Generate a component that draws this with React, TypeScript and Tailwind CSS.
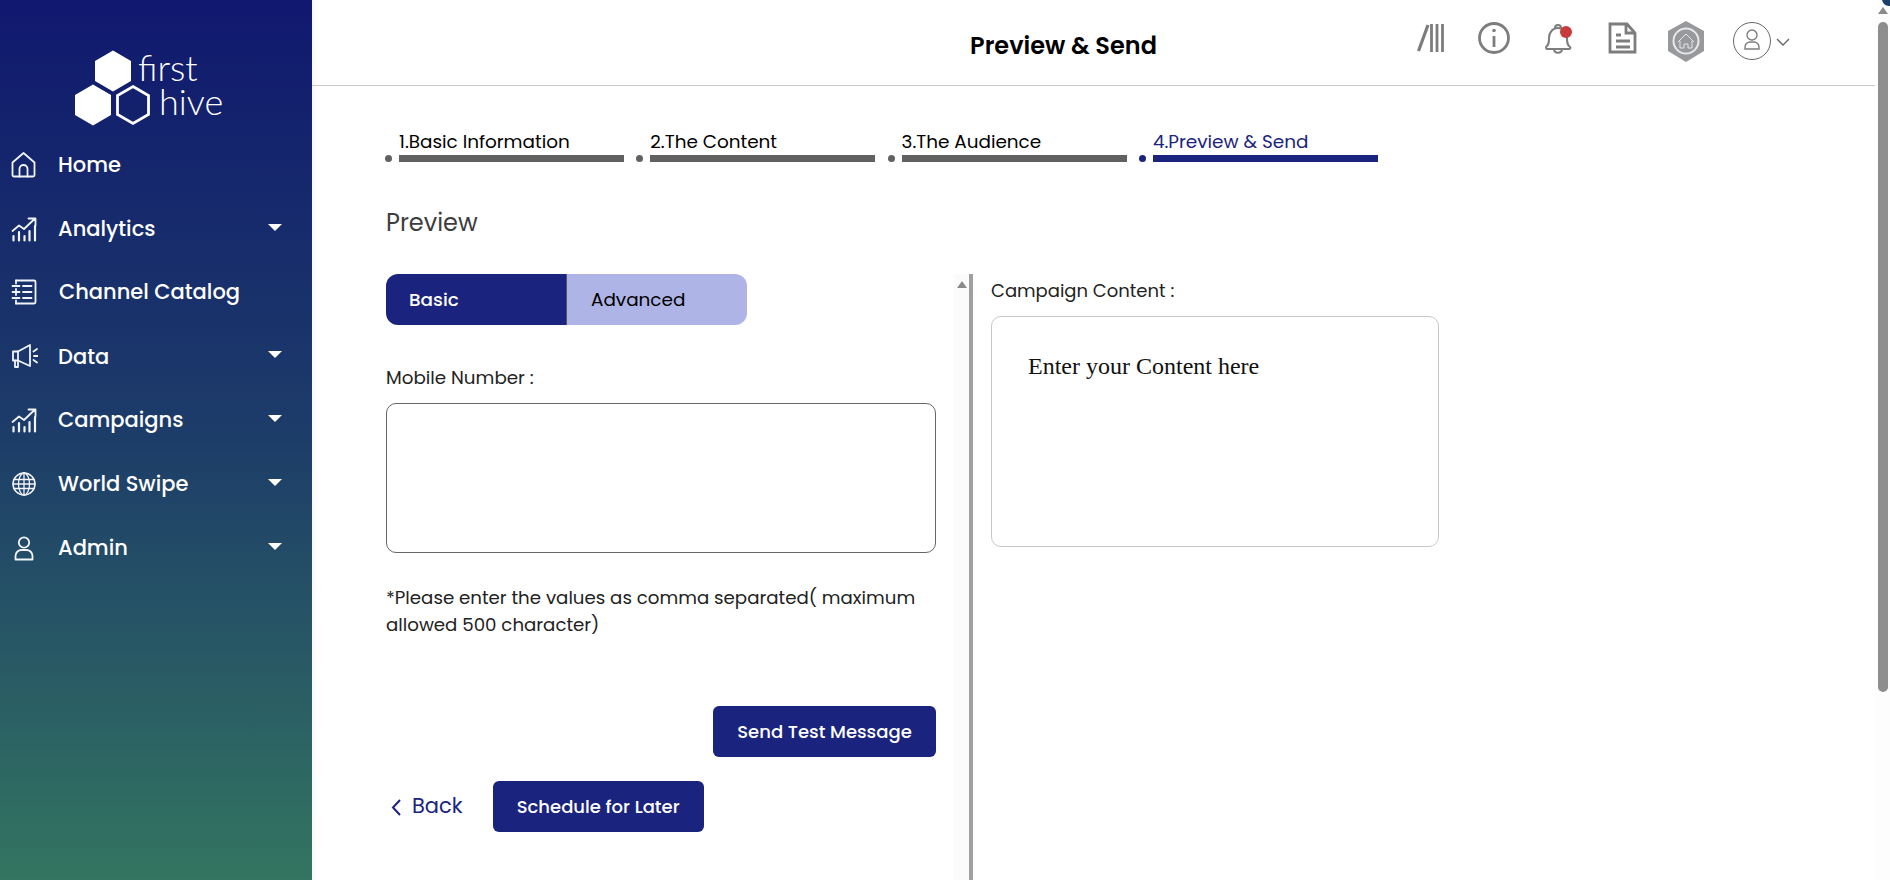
import React from "react";

function Hex({ x, y, solid }: { x: number; y: number; solid?: boolean }) {
  const p = `${x},${y - 20.5} ${x + 18},${y - 10} ${x + 18},${y + 10} ${x},${y + 20.5} ${x - 18},${y + 10} ${x - 18},${y - 10}`;
  return solid ? <polygon points={p} fill="#fff" /> : <polygon points={`${x},${y - 18.5} ${x + 15.5},${y - 9.5} ${x + 15.5},${y + 9.5} ${x},${y + 18.5} ${x - 15.5},${y + 9.5} ${x - 15.5},${y - 9.5}`} fill="none" stroke="#fff" strokeWidth="2.8" />;
}

function ico(children: React.ReactNode) {
  return (
    <svg width="28" height="28" viewBox="0 0 28 28" fill="none" stroke="#f1f4f8" strokeWidth="1.8" strokeLinecap="round" strokeLinejoin="round">
      {children}
    </svg>
  );
}

const HomeI = ico(<><path d="M2.5 11.5 13.5 2l11 9.5V24a1.5 1.5 0 0 1-1.5 1.5H4A1.5 1.5 0 0 1 2.5 24Z" /><path d="M9.5 25.5V18a4 4 0 0 1 8 0v7.5" /></>);
const ChartI = ico(<><path d="M2.5 16 9 10.5l5 3.5L24.5 4M18.5 3.5h7v7" /><path d="M3.5 21v4.5M9 17v8.5M14.5 21v4.5M19.5 16v9.5M25 11v14.5" strokeWidth="2.2" /></>);
const BookI = ico(<><path d="M6 2.5h18a1.5 1.5 0 0 1 1.5 1.5v20a1.5 1.5 0 0 1-1.5 1.5H6" /><path d="M6 2.5v3M6 11v6M6 22.5v3M2.5 8h7M2.5 14h7M2.5 20h7M13 8h8.5M13 14h8.5M13 20h8.5" /></>);
const MegaI = ico(<><path d="M8 9.5 20 3v21L8 18.5H3V9.5Z" /><path d="M8 9.5v9M5 18.5V25h3v-6M23.5 9.5l3.5-2.5M24 14h4M23.5 18l3.5 2.5" /></>);
const GlobeI = ico(<><circle cx="14" cy="14" r="11" strokeWidth="1.5" /><ellipse cx="14" cy="14" rx="5.5" ry="11" strokeWidth="1.3" /><path d="M14 3v22M4 9.5h20M3 14h22M4 18.5h20" strokeWidth="1.3" /></>);
const UserI = ico(<><circle cx="14" cy="8.5" r="5.2" /><path d="M5.5 25.5v-3.5a6 6 0 0 1 6-6h5a6 6 0 0 1 6 6v3.5Z" /></>);

const NAV = [
  { t: "Home", i: HomeI, caret: false },
  { t: "Analytics", i: ChartI, caret: true },
  { t: "Channel Catalog", i: BookI, caret: false, shift: true },
  { t: "Data", i: MegaI, caret: true },
  { t: "Campaigns", i: ChartI, caret: true },
  { t: "World Swipe", i: GlobeI, caret: true },
  { t: "Admin", i: UserI, caret: true },
];

const STEPS = [
  { t: "1.Basic Information", on: false },
  { t: "2.The Content", on: false },
  { t: "3.The Audience", on: false },
  { t: "4.Preview & Send", on: true },
];

export default function App() {
  return (
    <div className="flex h-[880px] w-[1890px] overflow-hidden bg-white font-['Poppins','Inter','Liberation_Sans',sans-serif] text-black">
      <aside className="flex h-full w-[312px] shrink-0 flex-col bg-[linear-gradient(180deg,#10186f_0%,#1d3d69_50%,#337560_100%)]">
        <div className="flex h-[133px] items-start">
          <div className="relative mt-[48px] ml-[70px] h-[80px] w-[160px]">
            <svg width="84" height="80" viewBox="0 0 84 80" className="absolute top-0 left-0">
              <Hex x={43} y={23} solid />
              <Hex x={23} y={57} solid />
              <Hex x={63} y={57} />
            </svg>
            <span className="absolute top-[3px] left-[68px] font-['Lato',sans-serif] text-[36px] leading-[32px] font-light text-white">first</span>
            <span className="absolute top-[37px] left-[89px] font-['Lato',sans-serif] text-[36px] leading-[32px] font-light text-white">hive</span>
          </div>
        </div>
        <nav className="flex flex-col">
          {NAV.map((n) => (
            <div key={n.t} className="flex h-[63.8px] items-center text-[21px] font-medium text-white">
              <span className="ml-[10px] flex w-[28px] justify-center">{n.i}</span>
              <span className={n.shift ? "ml-[21px] -translate-y-[1px]" : "ml-[20px]"}>{n.t}</span>
              {n.caret && <span className="mr-[30px] mb-[3px] ml-auto h-0 w-0 border-x-[7px] border-t-[7px] border-x-transparent border-t-white" />}
            </div>
          ))}
        </nav>
      </aside>

      <main className="flex min-w-0 flex-1 flex-col shadow-[inset_6px_0_6px_-4px_rgba(0,0,0,0.05)]">
        <header className="relative flex h-[86px] shrink-0 items-center justify-center border-b border-[#c9c9c9] pr-[60px]">
          <h1 className="mb-[-6px] text-[24px] font-semibold text-black">Preview &amp; Send</h1>
          <div className="absolute top-0 left-[1105px] h-[85px] w-[400px]">
            <svg width="400" height="85" viewBox="1417 0 400 85" fill="none" stroke="#7d7d7d">
              <path d="M1418.5 51 1428 25" strokeWidth="3.2" />
              <path d="M1431.5 24v28M1437 24v28M1442.5 24v28" strokeWidth="2.8" />
              <circle cx="1494" cy="38" r="14.5" strokeWidth="2.8" />
              <path d="M1494 36v11" strokeWidth="2.8" />
              <circle cx="1494" cy="30.5" r="1.8" fill="#7d7d7d" stroke="none" />
              <path d="M1546 47c3-2 3-5 3-9 0-6 4-10 9-10s9 4 9 10c0 4 0 7 3 9 1 1 0 2-1 2h-22c-1 0-1-1-1-2ZM1554 49c0 5 8 5 8 0M1555 28c0-4 6-4 6 0" strokeWidth="2" />
              <circle cx="1566" cy="32" r="6" fill="#c93a3a" stroke="none" />
              <path d="M1610 24h17l8 9v19h-25ZM1626 24v9h9M1616 35h5M1616 41h14M1616 47h14" strokeWidth="2.8" />
              <polygon points="1686,21 1704,31 1704,51 1686,62 1668,51 1668,31" fill="#98999c" stroke="none" />
              <circle cx="1686" cy="41" r="12.5" stroke="#e8e8e8" strokeWidth="2" />
              <path d="M1678 42 1686 34l8 8M1680 41v7h4v-4h4v4h4v-7" stroke="#e8e8e8" strokeWidth="1" />
              <circle cx="1752" cy="41" r="18.5" strokeWidth="1" stroke="#666" />
              <circle cx="1752" cy="35" r="5" strokeWidth="1.4" />
              <path d="M1745 49v-2a5 5 0 0 1 5-5h4a5 5 0 0 1 5 5v2Z" strokeWidth="1.4" />
              <path d="M1777 39l6 6 6-6" strokeWidth="1.4" stroke="#666" />
            </svg>
          </div>
        </header>

        <section className="flex min-h-0 flex-1 flex-col pl-[73px]">
          <div className="mt-[43px] flex h-[33px] gap-0">
            {STEPS.map((s) => (
              <div key={s.t} className="flex w-[251.3px] items-end">
                <span className={`mr-[7px] h-[7px] w-[7px] rounded-full ${s.on ? "bg-[#1a237e]" : "bg-[#616161]"}`} />
                <div className="flex w-[225px] flex-col">
                  <span className={`text-[18.4px] leading-[26px] whitespace-nowrap ${s.on ? "text-[#1a237e]" : "text-black"}`}>{s.t}</span>
                  <span className={`h-[7px] ${s.on ? "bg-[#1a237e]" : "bg-[#616161]"}`} />
                </div>
              </div>
            ))}
          </div>

          <h2 className="mt-[46px] ml-[1px] text-[24px] leading-[30px] text-[#3d3d3d]">Preview</h2>

          <div className="flex min-h-0 flex-1 pt-[36px]">
            <div className="ml-[1px] flex w-[550px] shrink-0 flex-col">
              <div className="flex h-[51px] w-[361px] overflow-hidden rounded-[12px] text-[18.4px] leading-[51px]">
                <span className="w-[181px] border-r border-[#555] bg-[#1a237e] pl-[23px] font-medium text-white">Basic</span>
                <span className="flex-1 bg-[#aeb4e6] pl-[24px] text-black">Advanced</span>
              </div>
              <label className="mt-[40px] text-[18.3px] leading-[26px] text-[#222]">Mobile Number :</label>
              <textarea className="mt-[12px] h-[150px] w-[550px] resize-none rounded-[10px] border border-[#666] bg-white" />
              <p className="mt-[31px] w-[550px] text-[18.2px] leading-[27px] text-[#222]">*Please enter the values as comma separated( maximum allowed 500 character)</p>
              <button className="mt-[68px] ml-auto h-[51px] w-[223px] rounded-[6px] bg-[#1a237e] text-[18px] font-medium text-white">Send Test Message</button>
              <div className="mt-[24px] flex items-center">
                <svg width="14" height="20" viewBox="0 0 14 20" className="ml-[3px]" fill="none" stroke="#1a237e" strokeWidth="2"><path d="M11 3 4 10.5 11 18" /></svg>
                <span className="mb-[2px] ml-[9px] text-[21px] text-[#1a237e]">Back</span>
                <button className="ml-[30px] h-[51px] w-[211px] rounded-[6px] bg-[#1a237e] text-[18px] font-medium text-white">Schedule for Later</button>
              </div>
            </div>

            <div className="ml-[18px] flex w-[15px] shrink-0 justify-center bg-[#fbfbfb] pt-[7px]">
              <span className="h-0 w-0 border-x-[5px] border-b-[7px] border-x-transparent border-b-[#8a8a8a]" />
            </div>
            <div className="w-[4px] shrink-0 bg-[#a0a0a0]" />
            <div className="ml-[18px] flex flex-col">
              <span className="mt-[4px] text-[18px] leading-[26px] text-[#222]">Campaign Content :</span>
              <div className="mt-[12px] h-[231px] w-[448px] rounded-[10px] border border-[#c8c8c8] pt-[34px] pl-[36px] font-['Liberation_Serif',serif] text-[24px] leading-[30px] text-[#111]">Enter your Content here</div>
            </div>
          </div>
        </section>
      </main>

      <div className="relative flex w-[15px] shrink-0 flex-col items-center bg-[#fdfdfd]">
        <span className="absolute top-[-8px] right-[-6px] h-[14px] w-[14px] rounded-full bg-[#1c3f6b]" />
        <span className="mt-[7px] h-0 w-0 border-x-[5px] border-b-[7px] border-x-transparent border-b-[#8a8a8a]" />
        <span className="mt-[8px] h-[670px] w-[10px] rounded-full bg-[#8e8e8e]" />
      </div>
    </div>
  );
}
